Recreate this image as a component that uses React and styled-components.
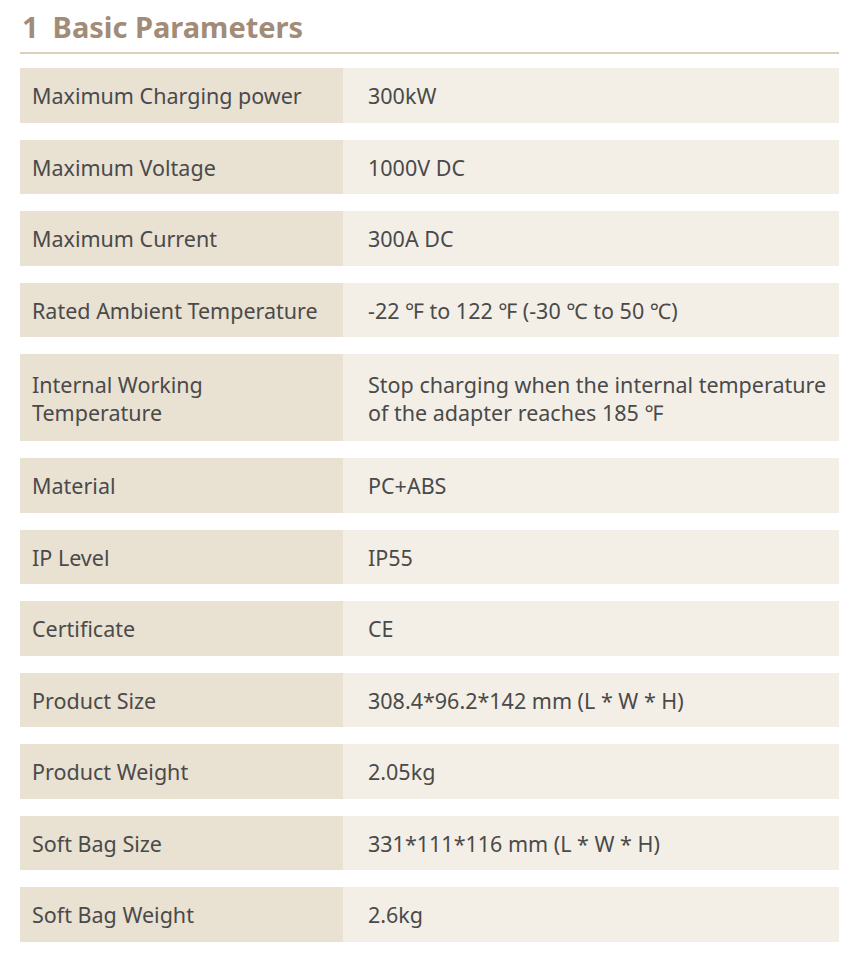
import React from "react";
import styled, { createGlobalStyle } from "styled-components";

const Global = createGlobalStyle`
  html, body { margin: 0; padding: 0; background: #ffffff; }
  body { font-family: "Noto Sans", "Open Sans", sans-serif; }
`;

const Page = styled.div`
  width: 819px;
  padding: 6px 20px 20px 20px;
`;

const Title = styled.h1`
  margin: 0;
  padding: 0 0 4px 2px;
  font-size: 29px;
  font-weight: 700;
  color: #a28c77;
  line-height: 42px;
  border-bottom: 2px solid #ddd0bb;
  display: flex;
  gap: 14px;
`;

const Table = styled.div`
  display: flex;
  flex-direction: column;
  gap: 17px;
  margin-top: 14px;
`;

const Row = styled.div`
  display: grid;
  grid-template-columns: 323px 1fr;
  min-height: ${(p) => (p.$tall ? "87px" : "54.5px")};
`;

const Cell = styled.div`
  color: #4a4a4a;
  font-size: 21.5px;
  line-height: 28px;
  display: flex;
  align-items: center;
  padding-top: 2px;
  box-sizing: border-box;
`;

const Label = styled(Cell)`
  background: #e9e1d2;
  padding-left: 12px;
  padding-right: 6px;
`;

const Value = styled(Cell)`
  background: #f3efe7;
  padding-left: 25px;
  padding-right: 6px;
`;

const rows = [
  ["Maximum Charging power", "300kW"],
  ["Maximum Voltage", "1000V DC"],
  ["Maximum Current", "300A DC"],
  ["Rated Ambient Temperature", "-22 \u2109 to 122 \u2109 (-30 \u2103 to 50 \u2103)"],
  ["Internal Working Temperature", "Stop charging when the internal temperature of the adapter reaches 185 \u2109", true],
  ["Material", "PC+ABS"],
  ["IP Level", "IP55"],
  ["Certificate", "CE"],
  ["Product Size", "308.4*96.2*142 mm (L * W * H)"],
  ["Product Weight", "2.05kg"],
  ["Soft Bag Size", "331*111*116 mm (L * W * H)"],
  ["Soft Bag Weight", "2.6kg"],
];

export default function App() {
  return (
    <>
      <Global />
      <Page>
        <Title>
          <span>1</span>
          <span>Basic Parameters</span>
        </Title>
        <Table>
          {rows.map(([k, v, tall]) => (
            <Row key={k} $tall={tall}>
              <Label>{k}</Label>
              <Value>{v}</Value>
            </Row>
          ))}
        </Table>
      </Page>
    </>
  );
}
